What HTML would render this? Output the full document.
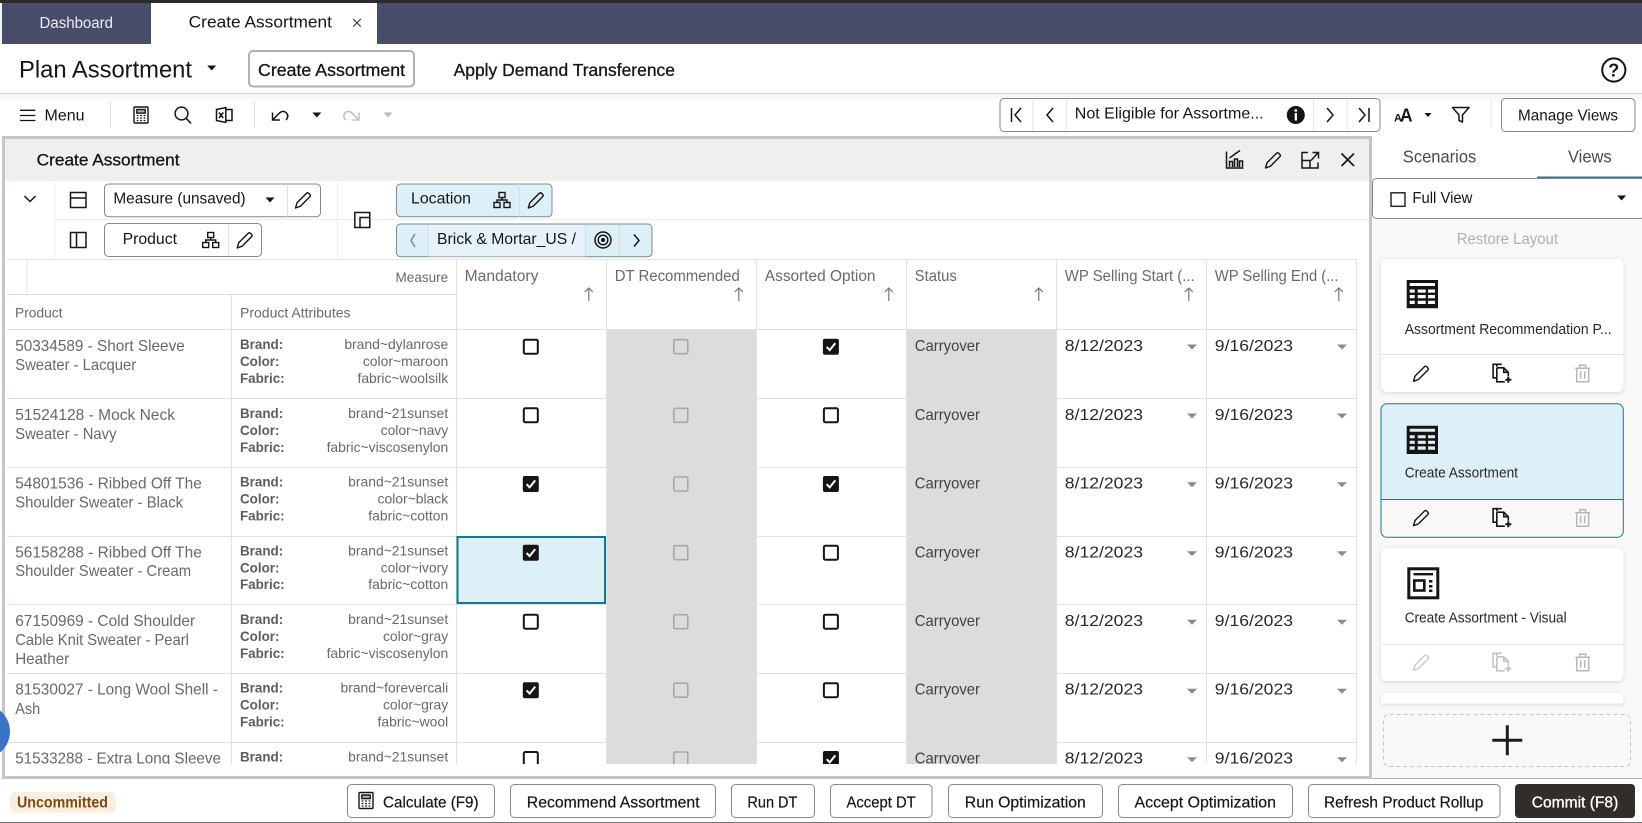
<!DOCTYPE html>
<html lang="en">
<head>
<meta charset="utf-8">
<title>Create Assortment</title>
<style>
html,body{margin:0;padding:0;background:#fff;overflow:hidden;width:1642px;height:823px}
svg{display:block}
text{font-family:"Liberation Sans",sans-serif;white-space:pre}
.m{stroke:#161513;stroke-width:.3}
.h{font-size:15.4px;fill:#6b6965}
.s{font-size:13.8px;fill:#6b6965}
.p{font-size:15.8px;fill:#6b6965}
.l{font-size:13.4px;fill:#5f5d59;font-weight:bold}
.v{font-size:13.9px;fill:#6b6965;text-anchor:end}
.c{font-size:15.8px;fill:#45423e}
.d{font-size:15.8px;fill:#2a2825}
.b{font-size:16px;fill:#161513;stroke:#161513;stroke-width:.2}
.n{font-size:16px;fill:#161513}
.k{font-size:14.4px;fill:#2a2825}
.i{fill:none;stroke:#161513;stroke-width:1.5}
.g{fill:none;stroke:#c4c4c4;stroke-width:1.6}
.ln{stroke:#e3e1de;stroke-width:1}
.btn{fill:#fff;stroke:#8b8985;stroke-width:1}
</style>
</head>
<body>
<svg width="1642" height="823" viewBox="0 0 1642 823" xmlns="http://www.w3.org/2000/svg">
<defs>
<clipPath id="tb"><rect x="5" y="259" width="1364" height="505"/></clipPath>
<clipPath id="cl"><rect x="1372" y="220" width="270" height="483.5"/></clipPath>
<path id="car" d="M-4.5 -2.5H4.5L0 2.5Z"/>
<g id="pen"><path d="M-7.5 8-6 2.8 3.4 -6.6Q4.6 -7.8 5.8 -6.6L6.8 -5.600Q8 -4.400 6.800 -3.200L-2.600 6.200Z" fill="none" stroke-width="1.4" stroke-linejoin="round"/></g>
<g id="hier" fill="none" stroke="#161513" stroke-width="1.4"><rect x="-3" y="-7.5" width="6" height="5"/><path d="M0 -2.5V0M-5 2.5V0H5V2.5"/><rect x="-8" y="2.5" width="6" height="5"/><rect x="2" y="2.5" width="6" height="5"/></g>
<g id="cpy" fill="none" stroke-width="1.6"><path d="M-5 -9H-9.2V4.5H-5.5"/><path d="M-5.5 -5.5V8.5H2.5M-5.5 -6.5V-9H-.5M-5.5 -5.5H1.5L6 -1V3M1.5 -5.5V-1H6"/><path d="M3 6.5H9M6 3.5V9.5" stroke-width="2"/></g>
<g id="tr" fill="none" stroke-width="1.5"><path d="M-7.5 -5H7.5M-3 -5V-8H3V-5M-6 -5V8.5H6V-5M-2 -2V5.5M2 -2V5.5"/></g>
<path id="tab" fill-rule="evenodd" d="M0 0H31.3V28.3H0ZM3 3V6H28.3V3ZM3 9.5V12.6H8V9.5ZM11 9.5V12.6H19V9.5ZM21.3 9.5V12.6H28.3V9.5ZM3 15V18.2H8V15ZM11 15V18.2H19V15ZM21.3 15V18.2H28.3V15ZM3 20.7V24H8V20.7ZM11 20.7V24H19V20.7ZM21.3 20.7V24H28.3V20.7Z"/>
<g id="cbo"><rect x="-7" y="-7" width="14" height="14" rx="1.5" fill="#fff" stroke="#161513" stroke-width="2"/></g>
<g id="cbd"><rect x="-7" y="-7" width="14" height="14" rx="1.5" fill="none" stroke="#a9a8a6" stroke-width="1.6"/></g>
<g id="cbc"><rect x="-8" y="-8" width="16" height="16" rx="2" fill="#161513"/><path d="M-4.2 .2-1.2 3.4 4.4 -3.6" fill="none" stroke="#fff" stroke-width="2"/></g>
<g id="arr"><path d="M0 -6.5V6.5M-4 -2.5 0 -6.5 4 -2.5" fill="none" stroke="#6f7a76" stroke-width="1.2"/></g>
<path id="dcar" d="M-5 -2.200H5L0 2.800Z" fill="#8d8b87"/>
<g id="calc" fill="none" stroke="#161513" stroke-width="1.4"><rect x="-7" y="-8" width="14" height="16" rx="1"/><rect x="-4.2" y="-5.5" width="8.4" height="3.6" fill="#161513" fill-opacity=".35"/><path d="M-4.3 .5H-2.6M-.9 .5H.9M2.6 .5H4.3M-4.3 3H-2.6M-.9 3H.9M2.6 3H4.3M-4.3 5.5H-2.6M-.9 5.5H.9M2.6 5.5H4.3" stroke-width="1.3"/></g>
</defs>

<!-- top bars -->
<rect width="1642" height="823" fill="#fff"/>
<rect width="1642" height="3" fill="#2b2a2e"/>
<rect x="2" y="3" width="1640" height="41" fill="#474c69"/>
<rect y="3" width="2" height="41" fill="#f4f4f6"/>
<rect x="151" y="3" width="226" height="41" fill="#fff"/>
<text x="39.5" y="28" font-size="15.500" fill="#eceDf2" textLength="73.5" lengthAdjust="spacingAndGlyphs">Dashboard</text>
<text x="188.7" y="27.7" font-size="17" fill="#161513" textLength="143.3" lengthAdjust="spacingAndGlyphs">Create Assortment</text>
<path d="M353.2 19 360.8 26.6M360.8 19 353.2 26.6" stroke="#333" stroke-width="1.1"/>

<!-- header -->
<text x="19" y="77.7" font-size="24" fill="#161513" textLength="173" lengthAdjust="spacingAndGlyphs">Plan Assortment</text>
<use href="#car" x="211.7" y="68" fill="#161513"/>
<rect x="249" y="51" width="165" height="35.5" rx="4" fill="#fff" stroke="#b3b0aa" stroke-width="2"/>
<text class="m" x="258" y="76" font-size="17.500" fill="#161513" textLength="147" lengthAdjust="spacingAndGlyphs">Create Assortment</text>
<text class="m" x="453.6" y="76" font-size="17.500" fill="#161513" textLength="221.4" lengthAdjust="spacingAndGlyphs">Apply Demand Transference</text>
<circle cx="1613.8" cy="70" r="11.600" fill="none" stroke="#161513" stroke-width="2"/>
<text x="1613.8" y="76.500" font-size="18" font-weight="bold" fill="#161513" text-anchor="middle">?</text>
<rect y="93" width="1642" height="1" fill="#d8d6d2"/>
<rect y="94" width="1642" height="5" fill="#f4f3f1" opacity=".7"/>

<!-- toolbar -->
<path d="M20 110.3H35.4M20 115.5H35.4M20 120.5H35.4" stroke="#161513" stroke-width="1.3"/>
<text x="44.5" y="120.7" font-size="15.500" fill="#161513" textLength="40" lengthAdjust="spacingAndGlyphs">Menu</text>
<rect x="110" y="100" width="1" height="28" fill="#e6e4e1"/>
<use href="#calc" x="141" y="115"/>
<circle cx="181.5" cy="113.5" r="6.4" class="i"/><path d="M186 118.2 191 123.5" class="i"/>
<path d="M216.500 109.500 225.800 107.500V122.500L216.500 120.500ZM225.800 109.500H232V120.500H225.800" class="i" stroke-width="1.300"/>
<path d="M219 112.500 223.300 118M223.300 112.500 219 118" class="i" stroke-width="1"/>
<rect x="254" y="100" width="1" height="28" fill="#e6e4e1"/>
<path d="M272.500 112.500V120H280M272.500 120 279.500 113Q283 110 286 112.500 289.500 116 286 120" class="i" stroke-width="1.600"/>
<use href="#car" x="316.8" y="115" fill="#161513"/>
<path d="M359 112.500V120H351.500M359 120 352 113Q348.500 110 345.500 112.500 342 116 345.500 120" class="g"/>
<use href="#car" x="388" y="115" fill="#bdbcb9"/>

<rect x="1000" y="98.500" width="380" height="33" rx="4" class="btn"/>
<path d="M1033 99V131M1066.600 99V131M1313.600 99V131M1347 99V131" stroke="#e6e4e1"/>
<path d="M1011.500 108V122M1021 108 1015 115 1021 122" class="i" stroke-width="1.600"/>
<path d="M1053 108 1047 115 1053 122" class="i" stroke-width="1.600"/>
<text x="1074.800" y="118.600" font-size="16" fill="#161513" textLength="188.800" lengthAdjust="spacingAndGlyphs">Not Eligible for Assortme...</text>
<circle cx="1295.800" cy="115" r="9" fill="#161513"/>
<circle cx="1295.800" cy="110.500" r="1.400" fill="#fff"/>
<rect x="1294.700" y="113" width="2.300" height="7.500" fill="#fff"/>
<path d="M1327 108 1333 115 1327 122" class="i" stroke-width="1.600"/>
<path d="M1359 108 1365 115 1359 122M1369 108V122" class="i" stroke-width="1.600"/>
<text x="1394" y="121.700" font-size="11" font-weight="bold" fill="#161513">A</text>
<text x="1400" y="121.700" font-size="18" font-weight="bold" fill="#161513" textLength="12.500" lengthAdjust="spacingAndGlyphs">A</text>
<use href="#car" x="1428" y="115" fill="#161513" transform="translate(285.600 23) scale(.8)"/>
<path d="M1452.500 107.500H1469L1462.500 115V122L1459 120.500V115Z" class="i" stroke-width="1.400" stroke-linejoin="round"/>
<rect x="1490.700" y="100" width="1" height="28" fill="#e6e4e1"/>
<rect x="1501.500" y="98.500" width="133.500" height="33" rx="4" class="btn"/>
<text class="n" x="1518" y="120.700" textLength="100" lengthAdjust="spacingAndGlyphs">Manage Views</text>

<!-- main panel -->
<rect x="3.500" y="137.500" width="1367" height="640" fill="#fff" stroke="#c8c5c0" stroke-width="3"/>
<rect x="5" y="139" width="1364" height="42" fill="#f1efed"/>
<text class="m" x="36.700" y="165.700" font-size="16.500" fill="#161513" textLength="142.800" lengthAdjust="spacingAndGlyphs">Create Assortment</text>
<g class="i" stroke-width="1.200">
<path d="M1226.500 151.500V168H1243.500"/><path d="M1229.500 158 1235 154 1240 150.500"/>
<path d="M1229.500 167V161.500H1232.500V167M1234.500 167V159H1237.500V167M1239.500 167V161H1242.500V167"/>
</g>
<use href="#pen" x="1273" y="160" stroke="#161513"/>
<path d="M1308 152.500H1302V168H1318V162.500M1302 160.500H1310V168M1311 160.500 1318 152.800M1312.500 152.500H1318.500V158.500" class="i" stroke-width="1.500"/>
<path d="M1341.500 153.500 1354 166M1354 153.500 1341.500 166" stroke="#161513" stroke-width="1.600"/>

<!-- controls -->
<path d="M55 219.500H1369" stroke="#f0eeec"/>
<path d="M55 181V259M337.500 181V259" stroke="#f0eeec"/>
<path d="M24.500 196 30 201.500 35.500 196" class="i" stroke-width="1.800"/>
<g class="i" stroke-width="1.600">
<rect x="70.500" y="192.500" width="15.500" height="15"/><path d="M70.500 198H86"/>
<rect x="70.500" y="232.500" width="15.500" height="15"/><path d="M76.500 232.500V247.500"/>
<rect x="354.800" y="212.500" width="15" height="15"/><path d="M360 227.500V217.500H369.800"/>
</g>
<rect x="104.500" y="184" width="216" height="32.700" rx="4" class="btn"/>
<path d="M287.400 184V216.700" stroke="#e0dedb"/>
<text class="n" x="113.400" y="203.300" textLength="132.200" lengthAdjust="spacingAndGlyphs">Measure (unsaved)</text>
<use href="#car" x="270" y="200" fill="#161513"/>
<use href="#pen" x="303" y="200" stroke="#161513"/>
<rect x="104.500" y="223.500" width="157" height="33" rx="4" class="btn"/>
<path d="M228.600 224V256" stroke="#e0dedb"/>
<text class="n" x="122.600" y="244" textLength="54.400" lengthAdjust="spacingAndGlyphs">Product</text>
<use href="#hier" x="210.700" y="240"/>
<use href="#pen" x="244.700" y="240" stroke="#161513"/>
<rect x="396.500" y="184" width="155.500" height="32.700" rx="4" fill="#def0f7" stroke="#7f8b90"/>
<path d="M519.300 184V216.700" stroke="#cfdfe5"/>
<text class="n" x="411" y="203.300" textLength="60" lengthAdjust="spacingAndGlyphs">Location</text>
<use href="#hier" x="502" y="200"/>
<use href="#pen" x="535.800" y="200" stroke="#161513"/>
<rect x="396.500" y="224" width="255.500" height="32.700" rx="4" fill="#def0f7" stroke="#7f8b90"/>
<rect x="428.400" y="224.500" width="157" height="32" fill="#e6f2f7"/>
<path d="M428.400 224.500V256.500M585.400 224.500V256.500M619.400 224.500V256.500" stroke="#cfdfe5"/>
<path d="M415 234 411 240.500 415 247" fill="none" stroke="#7a9099" stroke-width="1.600"/>
<text class="n" x="437" y="244" textLength="139" lengthAdjust="spacingAndGlyphs">Brick &amp; Mortar_US /</text>
<circle cx="603" cy="240" r="8" class="i" stroke-width="1.400"/><circle cx="603" cy="240" r="4.800" class="i" stroke-width="1.400"/><circle cx="603" cy="240" r="2" fill="#161513"/>
<path d="M634 234.500 639 240.500 634 246.500" class="i" stroke-width="1.600"/>

<!-- table -->
<rect x="606" y="329.300" width="150" height="434.700" fill="#dcdcdc"/>
<rect x="906" y="329.300" width="150" height="434.700" fill="#dcdcdc"/>
<rect x="456.500" y="536.500" width="149" height="67" fill="#def0f7"/>
<path d="M7 259.500H1356.500M7 294.500H456M7 329.500H1356.500M27 259.500V294.500M231.500 294.500V764M456.500 259.500V764M606.500 259.500V764M756.500 259.500V764M906.500 259.500V764M1056.500 259.500V764M1206.500 259.500V764M1356.500 259.500V764" class="ln"/>
<path d="M7 398.500H1356.500M7 467.500H1356.500M7 536.500H1356.500M7 604.500H1356.500M7 673.500H1356.500M7 742.500H1356.500" class="ln"/>
<rect x="457.500" y="537" width="147.500" height="66" fill="none" stroke="#0f7a94" stroke-width="2"/>

<text class="s" x="395.500" y="282" textLength="52.700" lengthAdjust="spacingAndGlyphs">Measure</text>
<text class="s" x="15" y="317.700" textLength="47.500" lengthAdjust="spacingAndGlyphs">Product</text>
<text class="s" x="240" y="317.700" textLength="110.500" lengthAdjust="spacingAndGlyphs">Product Attributes</text>
<text class="h" x="464.700" y="281" textLength="73.700" lengthAdjust="spacingAndGlyphs">Mandatory</text>
<text class="h" x="614.700" y="281" textLength="125.100" lengthAdjust="spacingAndGlyphs">DT Recommended</text>
<text class="h" x="764.800" y="281" textLength="110.700" lengthAdjust="spacingAndGlyphs">Assorted Option</text>
<text class="h" x="914.800" y="281" textLength="42" lengthAdjust="spacingAndGlyphs">Status</text>
<text class="h" x="1064.800" y="281" textLength="129.900" lengthAdjust="spacingAndGlyphs">WP Selling Start (...</text>
<text class="h" x="1214.800" y="281" textLength="123.700" lengthAdjust="spacingAndGlyphs">WP Selling End (...</text>
<use href="#arr" x="588.800" y="294.500"/><use href="#arr" x="738.800" y="294.500"/><use href="#arr" x="888.800" y="294.500"/><use href="#arr" x="1038.800" y="294.500"/><use href="#arr" x="1188.800" y="294.500"/><use href="#arr" x="1338.800" y="294.500"/>

<g clip-path="url(#tb)">
<!-- row 1 -->
<text class="p" x="15.200" y="351" textLength="169.600" lengthAdjust="spacingAndGlyphs">50334589 - Short Sleeve</text>
<text class="p" x="15.200" y="370" textLength="121" lengthAdjust="spacingAndGlyphs">Sweater - Lacquer</text>
<text class="l" x="240" y="349">Brand:</text><text class="l" x="240" y="366">Color:</text><text class="l" x="240" y="383">Fabric:</text>
<text class="v" x="448.200" y="349">brand~dylanrose</text><text class="v" x="448.200" y="366">color~maroon</text><text class="v" x="448.200" y="383">fabric~woolsilk</text>
<use href="#cbo" x="530.800" y="346.700"/><use href="#cbd" x="680.800" y="346.700"/><use href="#cbc" x="830.900" y="346.700"/>
<text class="c" x="914.800" y="351" textLength="65.200" lengthAdjust="spacingAndGlyphs">Carryover</text>
<text class="d" x="1064.800" y="351" textLength="78.200" lengthAdjust="spacingAndGlyphs">8/12/2023</text><use href="#dcar" x="1192" y="346.700"/>
<text class="d" x="1214.800" y="351" textLength="78.200" lengthAdjust="spacingAndGlyphs">9/16/2023</text><use href="#dcar" x="1342" y="346.700"/>
<!-- row 2 -->
<text class="p" x="15.200" y="420" textLength="159.800" lengthAdjust="spacingAndGlyphs">51524128 - Mock Neck</text>
<text class="p" x="15.200" y="439" textLength="101.300" lengthAdjust="spacingAndGlyphs">Sweater - Navy</text>
<text class="l" x="240" y="418">Brand:</text><text class="l" x="240" y="435">Color:</text><text class="l" x="240" y="452">Fabric:</text>
<text class="v" x="448.200" y="418">brand~21sunset</text><text class="v" x="448.200" y="435">color~navy</text><text class="v" x="448.200" y="452">fabric~viscosenylon</text>
<use href="#cbo" x="530.800" y="415.300"/><use href="#cbd" x="680.800" y="415.300"/><use href="#cbo" x="830.900" y="415.300"/>
<text class="c" x="914.800" y="420" textLength="65.200" lengthAdjust="spacingAndGlyphs">Carryover</text>
<text class="d" x="1064.800" y="420" textLength="78.200" lengthAdjust="spacingAndGlyphs">8/12/2023</text><use href="#dcar" x="1192" y="415.700"/>
<text class="d" x="1214.800" y="420" textLength="78.200" lengthAdjust="spacingAndGlyphs">9/16/2023</text><use href="#dcar" x="1342" y="415.700"/>
<!-- row 3 -->
<text class="p" x="15.200" y="488.700" textLength="186.600" lengthAdjust="spacingAndGlyphs">54801536 - Ribbed Off The</text>
<text class="p" x="15.200" y="507.700" textLength="167.900" lengthAdjust="spacingAndGlyphs">Shoulder Sweater - Black</text>
<text class="l" x="240" y="486.700">Brand:</text><text class="l" x="240" y="503.700">Color:</text><text class="l" x="240" y="520.700">Fabric:</text>
<text class="v" x="448.200" y="486.700">brand~21sunset</text><text class="v" x="448.200" y="503.700">color~black</text><text class="v" x="448.200" y="520.700">fabric~cotton</text>
<use href="#cbc" x="530.800" y="484"/><use href="#cbd" x="680.800" y="484"/><use href="#cbc" x="830.900" y="484"/>
<text class="c" x="914.800" y="488.700" textLength="65.200" lengthAdjust="spacingAndGlyphs">Carryover</text>
<text class="d" x="1064.800" y="488.700" textLength="78.200" lengthAdjust="spacingAndGlyphs">8/12/2023</text><use href="#dcar" x="1192" y="484.500"/>
<text class="d" x="1214.800" y="488.700" textLength="78.200" lengthAdjust="spacingAndGlyphs">9/16/2023</text><use href="#dcar" x="1342" y="484.500"/>
<!-- row 4 -->
<text class="p" x="15.200" y="557.300" textLength="186.600" lengthAdjust="spacingAndGlyphs">56158288 - Ribbed Off The</text>
<text class="p" x="15.200" y="576" textLength="175.900" lengthAdjust="spacingAndGlyphs">Shoulder Sweater - Cream</text>
<text class="l" x="240" y="555.500">Brand:</text><text class="l" x="240" y="572.500">Color:</text><text class="l" x="240" y="589">Fabric:</text>
<text class="v" x="448.200" y="555.500">brand~21sunset</text><text class="v" x="448.200" y="572.500">color~ivory</text><text class="v" x="448.200" y="589">fabric~cotton</text>
<use href="#cbc" x="530.800" y="552.700"/><use href="#cbd" x="680.800" y="552.700"/><use href="#cbo" x="830.900" y="552.700"/>
<text class="c" x="914.800" y="557.300" textLength="65.200" lengthAdjust="spacingAndGlyphs">Carryover</text>
<text class="d" x="1064.800" y="557.300" textLength="78.200" lengthAdjust="spacingAndGlyphs">8/12/2023</text><use href="#dcar" x="1192" y="553.500"/>
<text class="d" x="1214.800" y="557.300" textLength="78.200" lengthAdjust="spacingAndGlyphs">9/16/2023</text><use href="#dcar" x="1342" y="553.500"/>
<!-- row 5 -->
<text class="p" x="15.200" y="626" textLength="179.900" lengthAdjust="spacingAndGlyphs">67150969 - Cold Shoulder</text>
<text class="p" x="15.200" y="645" textLength="173.700" lengthAdjust="spacingAndGlyphs">Cable Knit Sweater - Pearl</text>
<text class="p" x="15.200" y="664" textLength="54" lengthAdjust="spacingAndGlyphs">Heather</text>
<text class="l" x="240" y="624">Brand:</text><text class="l" x="240" y="641">Color:</text><text class="l" x="240" y="658">Fabric:</text>
<text class="v" x="448.200" y="624">brand~21sunset</text><text class="v" x="448.200" y="641">color~gray</text><text class="v" x="448.200" y="658">fabric~viscosenylon</text>
<use href="#cbo" x="530.800" y="621.700"/><use href="#cbd" x="680.800" y="621.700"/><use href="#cbo" x="830.900" y="621.700"/>
<text class="c" x="914.800" y="626" textLength="65.200" lengthAdjust="spacingAndGlyphs">Carryover</text>
<text class="d" x="1064.800" y="626" textLength="78.200" lengthAdjust="spacingAndGlyphs">8/12/2023</text><use href="#dcar" x="1192" y="622"/>
<text class="d" x="1214.800" y="626" textLength="78.200" lengthAdjust="spacingAndGlyphs">9/16/2023</text><use href="#dcar" x="1342" y="622"/>
<!-- row 6 -->
<text class="p" x="15.200" y="694.700" textLength="202.700" lengthAdjust="spacingAndGlyphs">81530027 - Long Wool Shell -</text>
<text class="p" x="15.200" y="714" textLength="25" lengthAdjust="spacingAndGlyphs">Ash</text>
<text class="l" x="240" y="692.700">Brand:</text><text class="l" x="240" y="709.700">Color:</text><text class="l" x="240" y="726.700">Fabric:</text>
<text class="v" x="448.200" y="692.700">brand~forevercali</text><text class="v" x="448.200" y="709.700">color~gray</text><text class="v" x="448.200" y="726.700">fabric~wool</text>
<use href="#cbc" x="530.800" y="690.200"/><use href="#cbd" x="680.800" y="690.200"/><use href="#cbo" x="830.900" y="690.200"/>
<text class="c" x="914.800" y="694.700" textLength="65.200" lengthAdjust="spacingAndGlyphs">Carryover</text>
<text class="d" x="1064.800" y="694.700" textLength="78.200" lengthAdjust="spacingAndGlyphs">8/12/2023</text><use href="#dcar" x="1192" y="691"/>
<text class="d" x="1214.800" y="694.700" textLength="78.200" lengthAdjust="spacingAndGlyphs">9/16/2023</text><use href="#dcar" x="1342" y="691"/>
<!-- row 7 -->
<text class="p" x="15.200" y="763.300" textLength="205.800" lengthAdjust="spacingAndGlyphs">51533288 - Extra Long Sleeve</text>
<text class="l" x="240" y="761.300">Brand:</text>
<text class="v" x="448.200" y="761.300">brand~21sunset</text>
<use href="#cbo" x="530.800" y="759"/><use href="#cbd" x="680.800" y="759"/><use href="#cbc" x="830.900" y="759"/>
<text class="c" x="914.800" y="763.300" textLength="65.200" lengthAdjust="spacingAndGlyphs">Carryover</text>
<text class="d" x="1064.800" y="763.300" textLength="78.200" lengthAdjust="spacingAndGlyphs">8/12/2023</text><use href="#dcar" x="1192" y="759.500"/>
<text class="d" x="1214.800" y="763.300" textLength="78.200" lengthAdjust="spacingAndGlyphs">9/16/2023</text><use href="#dcar" x="1342" y="759.500"/>
</g>
<circle cx="-17" cy="731.500" r="27" fill="#3a72c6"/>

<!-- right panel -->
<rect x="1372" y="219" width="270" height="559" fill="#f9f8f6"/>
<text x="1402.800" y="162.300" font-size="17.500" fill="#4c4945" textLength="73.500" lengthAdjust="spacingAndGlyphs">Scenarios</text>
<text x="1568" y="162.300" font-size="17.500" fill="#4c4945" textLength="43.600" lengthAdjust="spacingAndGlyphs">Views</text>
<rect x="1537" y="176.500" width="105" height="2" fill="#1f7a93"/>
<rect x="1372.500" y="178.500" width="272" height="40" rx="4" class="btn"/>
<rect x="1391" y="192.800" width="14" height="13.500" fill="none" stroke="#2a2825" stroke-width="1.500"/>
<text class="n" x="1412.400" y="203.200" textLength="60" lengthAdjust="spacingAndGlyphs">Full View</text>
<use href="#car" x="1621.600" y="198" fill="#161513"/>
<text x="1456.700" y="244" font-size="15.500" fill="#b4b1ac" textLength="101.300" lengthAdjust="spacingAndGlyphs">Restore Layout</text>

<g style="filter:drop-shadow(0 1px 2px rgba(0,0,0,.14))">
<rect x="1381" y="259" width="242.300" height="133" rx="6" fill="#fff"/>
<rect x="1381" y="547.700" width="242.300" height="133.300" rx="6" fill="#fff"/>
<g clip-path="url(#cl)"><rect x="1381" y="692.700" width="242.300" height="60" rx="6" fill="#fff"/></g>
</g>
<path d="M1381 354.500H1623.300M1381 644.500H1623.300" stroke="#e3e1de"/>
<use href="#tab" x="1406.700" y="280" fill="#161513"/>
<text class="k" x="1404.700" y="334" textLength="207" lengthAdjust="spacingAndGlyphs">Assortment Recommendation P...</text>
<use href="#pen" x="1421" y="373.300" stroke="#161513"/>
<use href="#cpy" x="1502.300" y="373.300" stroke="#161513"/>
<use href="#tr" x="1582.700" y="373.300" stroke="#b9b7b3"/>

<path d="M1386.500 403.800H1618Q1623 403.800 1623 408.800V499.500H1381.500V408.800Q1381.500 403.800 1386.500 403.800Z" fill="#def0f7"/>
<rect x="1381" y="403.800" width="242.300" height="133.500" rx="6" fill="none" stroke="#0f7a94"/>
<path d="M1381 499.500H1623.300" stroke="#0f7a94"/>
<use href="#tab" x="1406.700" y="425.700" fill="#161513"/>
<text class="k" x="1404.700" y="477.700" textLength="113.300" lengthAdjust="spacingAndGlyphs">Create Assortment</text>
<use href="#pen" x="1421" y="517.700" stroke="#161513"/>
<use href="#cpy" x="1502.300" y="517.700" stroke="#161513"/>
<use href="#tr" x="1582.700" y="517.700" stroke="#b9b7b3"/>

<rect x="1408.800" y="568.800" width="29" height="29" fill="none" stroke="#161513" stroke-width="3"/>
<rect x="1413.500" y="573" width="19.500" height="2.400" fill="#161513"/>
<rect x="1414.300" y="580.500" width="10" height="10" fill="none" stroke="#161513" stroke-width="2.600"/>
<rect x="1429" y="580" width="3.400" height="2.600" fill="#161513"/><rect x="1429" y="585" width="3.400" height="2.600" fill="#161513"/><rect x="1429" y="589.500" width="3.400" height="2.600" fill="#161513"/>
<text class="k" x="1404.700" y="622.700" textLength="162" lengthAdjust="spacingAndGlyphs">Create Assortment - Visual</text>
<use href="#pen" x="1421" y="662.300" stroke="#c9c8c5"/>
<use href="#cpy" x="1502.300" y="662.300" stroke="#c4c3c0"/>
<use href="#tr" x="1582.700" y="662.300" stroke="#b9b7b3"/>

<rect x="1383.500" y="714.500" width="247" height="52" rx="6" fill="#f9f8f6" stroke="#c9c6c1" stroke-dasharray="4 3"/>
<path d="M1492.300 740.300H1522.300M1507.300 725.300V755.300" stroke="#1d1b19" stroke-width="3"/>

<!-- bottom bar -->
<rect y="779" width="1642" height="44" fill="#fff"/>
<rect x="1372" y="778" width="270" height="1" fill="#b5b2ad"/>
<rect y="822" width="1642" height="1" fill="#77746f"/>
<rect x="10" y="791.700" width="106" height="21" rx="6" fill="#fbeee0"/>
<text x="17" y="807.700" font-size="15.500" font-weight="bold" fill="#7a4a14" textLength="91" lengthAdjust="spacingAndGlyphs">Uncommitted</text>

<rect x="347.500" y="784.500" width="147" height="33" rx="4" class="btn"/>
<use href="#calc" x="366" y="800.500"/>
<text class="b" x="383" y="807.300" textLength="95.600" lengthAdjust="spacingAndGlyphs">Calculate (F9)</text>
<rect x="510.500" y="784.500" width="205" height="33" rx="4" class="btn"/>
<text class="b" x="526.800" y="807.300" textLength="172.800" lengthAdjust="spacingAndGlyphs">Recommend Assortment</text>
<rect x="731.500" y="784.500" width="83" height="33" rx="4" class="btn"/>
<text class="b" x="747.400" y="807.300" textLength="50" lengthAdjust="spacingAndGlyphs">Run DT</text>
<rect x="830.500" y="784.500" width="101.500" height="33" rx="4" class="btn"/>
<text class="b" x="846.500" y="807.300" textLength="69.200" lengthAdjust="spacingAndGlyphs">Accept DT</text>
<rect x="948.500" y="784.500" width="154" height="33" rx="4" class="btn"/>
<text class="b" x="964.800" y="807.300" textLength="121" lengthAdjust="spacingAndGlyphs">Run Optimization</text>
<rect x="1118.500" y="784.500" width="174" height="33" rx="4" class="btn"/>
<text class="b" x="1134.500" y="807.300" textLength="141.500" lengthAdjust="spacingAndGlyphs">Accept Optimization</text>
<rect x="1308.500" y="784.500" width="191.500" height="33" rx="4" class="btn"/>
<text class="b" x="1324" y="807.300" textLength="159.300" lengthAdjust="spacingAndGlyphs">Refresh Product Rollup</text>
<rect x="1515" y="784" width="120" height="34" rx="4" fill="#312d2a"/>
<text x="1531.700" y="807.300" font-size="16" fill="#fff" stroke="#fff" stroke-width=".35" textLength="86.600" lengthAdjust="spacingAndGlyphs">Commit (F8)</text>
</svg>
</body>
</html>
